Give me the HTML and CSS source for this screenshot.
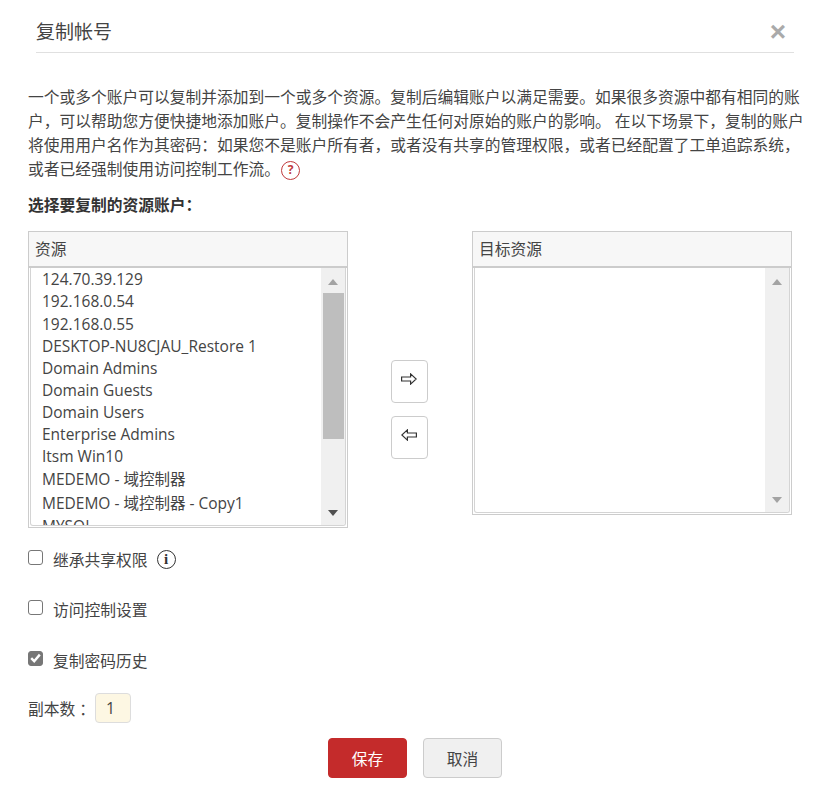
FILE: index.html
```html
<!DOCTYPE html>
<html lang="zh">
<head>
<meta charset="utf-8">
<title>复制帐号</title>
<link rel="stylesheet" href="styles.css">
</head>
<body>
<div class="dialog">
  <header class="head">
    <h1 class="title">复制帐号</h1>
    <span class="close">×</span>
  </header>
  <p class="intro">一个或多个账户可以复制并添加到一个或多个资源。复制后编辑账户以满足需要。如果很多资源中都有相同的账户，可以帮助您方便快捷地添加账户。复制操作不会产生任何对原始的账户的影响。 在以下场景下，复制的账户将使用用户名作为其密码：如果您不是账户所有者，或者没有共享的管理权限，或者已经配置了工单追踪系统，或者已经强制使用访问控制工作流。<span class="help">?</span></p>
  <h2 class="subhead">选择要复制的资源账户：</h2>
  <div class="transfer">
    <section class="panel">
      <div class="panel-head">资源</div>
      <div class="panel-body body-left">
        <ul class="list">
          <li>124.70.39.129</li>
          <li>192.168.0.54</li>
          <li>192.168.0.55</li>
          <li>DESKTOP-NU8CJAU_Restore 1</li>
          <li>Domain Admins</li>
          <li>Domain Guests</li>
          <li>Domain Users</li>
          <li>Enterprise Admins</li>
          <li>Itsm Win10</li>
          <li class="tall">MEDEMO - 域控制器</li>
          <li class="tall">MEDEMO - 域控制器 - Copy1</li>
          <li>MYSQL</li>
        </ul>
        <div class="scrollbar">
          <span class="arrow-up"></span>
          <span class="thumb"></span>
          <span class="arrow-down"></span>
        </div>
      </div>
    </section>
    <div class="movers">
      <button class="move" type="button" aria-label="添加">
        <svg width="16" height="12" viewBox="0 0 16 12"><path d="M0.6 4H9.6V0.9L15.2 6L9.6 11.1V8H0.6Z" fill="#fff" stroke="#333" stroke-width="1.2"/></svg>
      </button>
      <button class="move" type="button" aria-label="移除">
        <svg width="16" height="12" viewBox="0 0 16 12"><path d="M15.4 4H6.4V0.9L0.8 6L6.4 11.1V8H15.4Z" fill="#fff" stroke="#333" stroke-width="1.2"/></svg>
      </button>
    </div>
    <section class="panel">
      <div class="panel-head">目标资源</div>
      <div class="panel-body body-right">
        <div class="list"></div>
        <div class="scrollbar">
          <span class="arrow-up"></span>
          <span class="track"></span>
          <span class="arrow-down faded"></span>
        </div>
      </div>
    </section>
  </div>
  <div class="option first">
    <span class="check"></span><span class="label">继承共享权限</span>
    <span class="info">i</span>
  </div>
  <div class="option">
    <span class="check"></span><span class="label">访问控制设置</span>
  </div>
  <div class="option">
    <span class="check checked">
      <svg width="11" height="10" viewBox="0 0 11 10"><path d="M1.2 5.2L4.2 8.2L9.8 1.6" fill="none" stroke="#fff" stroke-width="2.4"/></svg>
    </span><span class="label">复制密码历史</span>
  </div>
  <div class="copies">
    <span class="copies-label">副本数 ：</span>
    <span class="count">1</span>
  </div>
  <div class="actions">
    <button class="btn primary" type="button">保存</button>
    <button class="btn" type="button">取消</button>
  </div>
</div>
</body>
</html>
```
FILE: styles.css
```css
* { box-sizing: border-box; }
html, body { margin: 0; padding: 0; background: #fff; }
body {
  font-family: "Open Sans", "Noto Sans CJK SC", sans-serif;
  font-size: 15.75px;
  color: #444;
}
.dialog { width: 828px; height: 796px; padding: 0 34px 0 28px; overflow: hidden; }
.head {
  display: flex;
  justify-content: space-between;
  align-items: center;
  height: 53px;
  margin-left: 8px;
  padding-top: 11px;
  border-bottom: 1px solid #e0e0e0;
}
.title { margin: 0; font-size: 19px; font-weight: 400; line-height: 40px; color: #444; }
.close {
  font-family: "Liberation Sans", sans-serif;
  font-size: 28px;
  font-weight: 700;
  line-height: 40px;
  color: #aaa;
  margin-right: 8px;
}
.intro {
  width: 782px;
  margin: 32px 0 0;
  line-height: 24.1px;
  color: #444;
}
.help {
  display: inline-flex;
  align-items: center;
  justify-content: center;
  width: 19px;
  height: 19px;
  margin-left: 1px;
  border: 1.5px solid #c0393b;
  border-radius: 50%;
  font-size: 12px;
  font-weight: 700;
  line-height: 1;
  color: #c0393b;
  vertical-align: 1px;
}
.subhead {
  margin: 12px 0 0;
  font-size: 15.75px;
  font-weight: 700;
  line-height: 24px;
  color: #333;
}
.transfer { display: flex; align-items: flex-start; margin-top: 14px; }
.panel { width: 320px; border: 1px solid #ccc; flex: none; }
.panel-head {
  height: 36px;
  padding-left: 6px;
  background: #f7f7f7;
  border-bottom: 2px solid #ccc;
  line-height: 34px;
  color: #444;
}
.panel-body {
  display: flex;
  margin: 0 1px 1px;
  border: 1px solid #d4d4d4;
  border-top: 0;
  border-radius: 0 0 3px 3px;
  overflow: hidden;
}
.body-left { height: 258px; }
.body-right { height: 245px; }
.list {
  flex: 1;
  min-width: 0;
  margin: 0;
  padding: 0 0 0 11px;
  list-style: none;
  overflow: hidden;
  font-size: 15.5px;
}
.list li { height: 22.1px; line-height: 22px; white-space: nowrap; }
.list .tall { height: 24px; line-height: 24px; }
.scrollbar {
  display: flex;
  flex-direction: column;
  align-items: center;
  flex: none;
  width: 24px;
  padding: 11px 0 9px 0;
  background: #f0f0f0;
}
.arrow-up, .arrow-down { width: 0; height: 0; border-left: 5.5px solid transparent; border-right: 5.5px solid transparent; flex: none; }
.arrow-up { border-bottom: 6px solid #a3a3a3; }
.arrow-down { border-top: 6px solid #505050; }
.arrow-down.faded { border-top-color: #a3a3a3; }
.thumb { width: 21px; height: 146px; margin: 8px 0 auto; background: #bebebe; }
.track { flex: 1; }
.movers {
  display: flex;
  flex-direction: column;
  align-items: center;
  gap: 13px;
  flex: none;
  width: 124px;
  padding-top: 129px;
  padding-right: 2px;
}
.move {
  display: flex;
  justify-content: center;
  padding: 12px 0 0;
  width: 37px;
  height: 43px;
  background: #fff;
  border: 1px solid #ccc;
  border-radius: 4px;
}
.option {
  display: flex;
  align-items: center;
  height: 24px;
  margin-top: 26.5px;
  color: #444;
}
.option.first { margin-top: 19px; }
.check {
  display: flex;
  align-items: center;
  justify-content: center;
  flex: none;
  width: 15px;
  height: 15px;
  margin-top: -4px;
  border: 1px solid #777;
  border-radius: 3px;
  background: #fff;
}
.check.checked { background: #777; }
.label { margin-left: 10px; }
.info {
  display: inline-flex;
  align-items: center;
  justify-content: center;
  width: 19px;
  height: 19px;
  margin-left: 9px;
  border: 1.5px solid #333;
  border-radius: 50%;
  font-family: "Liberation Serif", serif;
  font-size: 15px;
  font-weight: 700;
  line-height: 1;
  color: #333;
}
.copies { display: flex; align-items: center; height: 30px; margin-top: 21px; }
.copies-label { white-space: pre; }
.count {
  width: 36px;
  height: 30px;
  padding-left: 10px;
  background: #fdf7e3;
  border: 1px solid #ddd;
  border-radius: 4px;
  line-height: 28px;
}
.actions { display: flex; justify-content: center; gap: 16px; margin-top: 15px; padding-left: 8px; }
.btn {
  width: 79px;
  height: 40px;
  padding: 0;
  font: inherit;
  color: #444;
  background: #f0f0f0;
  border: 1px solid #ccc;
  border-radius: 4px;
}
.btn.primary { color: #fff; background: #c42b2b; border-color: #c42b2b; }
```
